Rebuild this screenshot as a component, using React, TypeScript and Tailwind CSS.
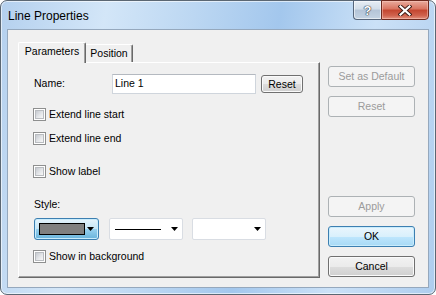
import { ReactNode } from "react";

const FONT = "[font-family:'Liberation_Sans',Arial,sans-serif]";

function CheckBox({ label }: { label: string }) {
  return (
    <div className="flex h-[13px] items-center">
      <span className="flex h-[13px] w-[13px] border border-[#8e8f8f] bg-white p-px">
        <span className="flex-1 border border-[#b9bcc0] bg-[linear-gradient(135deg,#c6cad0_0%,#e4e6e9_55%,#f7f7f7_100%)]" />
      </span>
      <span className="ml-[3px] text-[10.5px] leading-[13px] text-black">{label}</span>
    </div>
  );
}

function Btn({
  children,
  disabled,
  primary,
  className = "",
}: {
  children: ReactNode;
  disabled?: boolean;
  primary?: boolean;
  className?: string;
}) {
  const look = disabled
    ? "border-[#adb2b5] bg-[#f4f4f4] text-[#9b9b9b]"
    : primary
      ? "border-[#3c7fb1] bg-[linear-gradient(to_bottom,#eaf6fd_0%,#d9f0fc_50%,#bee6fd_51%,#a7d9f5_100%)] text-black shadow-[inset_0_0_0_1px_#c9ecfc]"
      : "border-[#707070] bg-[linear-gradient(to_bottom,#f2f2f2_0%,#ebebeb_50%,#dddddd_51%,#cfcfcf_100%)] text-black shadow-[inset_0_0_0_1px_#fafafa]";
  return (
    <div
      className={`flex items-center justify-center rounded-[3px] border text-[10.5px] leading-none ${look} ${className}`}
    >
      {children}
    </div>
  );
}

function Arrow() {
  return (
    <svg width="7" height="4" viewBox="0 0 7 4">
      <path d="M0 0H7L3.5 4Z" fill="#000" />
    </svg>
  );
}

export default function App() {
  return (
    <div className={`h-[295px] w-[436px] bg-white ${FONT}`}>
      <div className="flex h-[295px] w-[436px] flex-col rounded-[7px] border border-[#5b6773] bg-[linear-gradient(100deg,#b4d0ee_0%,#d3e6f8_22%,#bcd7f2_40%,#a3c7ed_58%,#cbe1f7_78%,#aecdee_100%)] shadow-[inset_0_0_0_1px_rgba(255,255,255,0.6)]">
        {/* title bar */}
        <div className="flex h-[28px] items-start justify-between">
          <span className="pl-[7px] pt-[8px] text-[12px] leading-[14px] text-black">Line Properties</span>
          <div className="-mt-px mr-[6px] flex h-[20px]">
            <div className="flex w-[28px] items-center justify-center rounded-bl-[4px] border border-r-0 border-[#56657a] bg-[linear-gradient(to_bottom,#e6edf5_0%,#d2dde9_45%,#b4c4d7_50%,#c4d3e3_100%)] shadow-[inset_0_0_0_1px_rgba(255,255,255,0.55)]">
              <span className="text-[13px] font-bold leading-none text-white [text-shadow:0_0_1px_#2a3440,0_0_1px_#2a3440,0_0_1px_#2a3440]">
                ?
              </span>
            </div>
            <div className="flex w-[48px] items-center justify-center rounded-br-[4px] border border-[#6e2a1f] bg-[linear-gradient(to_bottom,#e9ab9d_0%,#d9735f_45%,#c3452f_50%,#d0624d_80%,#e2927f_100%)] shadow-[inset_0_0_0_1px_rgba(255,210,200,0.45)]">
              <svg width="14" height="11" viewBox="0 0 14 11">
                <path d="M2.5 1.5L11.5 9.5M11.5 1.5L2.5 9.5" stroke="#3a1a14" strokeWidth="4" strokeLinecap="square" />
                <path d="M2.5 1.5L11.5 9.5M11.5 1.5L2.5 9.5" stroke="#ffffff" strokeWidth="2.2" strokeLinecap="square" />
              </svg>
            </div>
          </div>
        </div>

        {/* client */}
        <div className="flex flex-1 px-[6px] pb-[6px]">
          <div className="flex flex-1 border border-[#95a8bd] bg-[#f0f0f0] pl-[10px] pt-[13px]">
            {/* tab control */}
            <div className="flex w-[302px] flex-col">
              <div className="flex h-[19px] items-end">
                <div className="relative z-10 -mb-px flex h-[21px] w-[68px] items-center justify-center rounded-t-[2px] border-l border-t border-r border-l-white border-t-white border-r-[#696969] bg-[#f0f0f0] pb-[2px] text-[10.5px] text-black shadow-[inset_-1px_0_0_#a0a0a0]">
                  Parameters
                </div>
                <div className="flex h-[18px] w-[47px] items-center justify-center rounded-tr-[2px] border-t border-r border-t-white border-r-[#696969] text-[10.5px] text-black shadow-[inset_-1px_0_0_#a0a0a0]">
                  Position
                </div>
              </div>
              <div className="flex h-[216px] flex-col border border-l-white border-t-white border-r-[#696969] border-b-[#696969] shadow-[inset_-1px_-1px_0_#a0a0a0]">
                <div className="mt-[11px] flex h-[20px] items-center">
                  <span className="ml-[15px] w-[78px] text-[10.5px] text-black">Name:</span>
                  <div className="flex h-[20px] w-[144px] items-center border border-[#cfd5dc] border-t-[#b4b9c0] bg-white pl-[2px] text-[10.5px] text-black">
                    Line 1
                  </div>
                  <Btn className="ml-[5px] h-[18px] w-[42px]">Reset</Btn>
                </div>
                <div className="ml-[14px] mt-[14px]">
                  <CheckBox label="Extend line start" />
                </div>
                <div className="ml-[14px] mt-[11px]">
                  <CheckBox label="Extend line end" />
                </div>
                <div className="ml-[14px] mt-[20px]">
                  <CheckBox label="Show label" />
                </div>
                <span className="ml-[15px] mt-[20px] text-[10.5px] leading-[13px] text-black">Style:</span>
                <div className="mt-[7px] flex h-[22px]">
                  <div className="ml-[15px] flex w-[65px] items-center rounded-[3px] border border-[#3c7fb1] bg-[linear-gradient(to_bottom,#e5f4fc_0%,#c4e5f6_50%,#98d1ef_51%,#68b3db_100%)] pl-[4px] pr-[4px] shadow-[inset_0_0_0_1px_#c9ecfc]">
                    <span className="h-[12px] w-[47px] border border-black bg-[#808080]" />
                    <span className="ml-[2px] flex">
                      <Arrow />
                    </span>
                  </div>
                  <div className="ml-[10px] flex w-[74px] items-center rounded-[2px] border border-[#d9dde3] bg-white pl-[5px] pr-[4px]">
                    <span className="h-px w-[46px] bg-black" />
                    <span className="ml-auto flex">
                      <Arrow />
                    </span>
                  </div>
                  <div className="ml-[9px] flex w-[74px] items-center rounded-[2px] border border-[#d9dde3] bg-white pr-[4px]">
                    <span className="ml-auto flex">
                      <Arrow />
                    </span>
                  </div>
                </div>
                <div className="ml-[14px] mt-[10px]">
                  <CheckBox label="Show in background" />
                </div>
              </div>
            </div>

            {/* button column */}
            <div className="ml-[8px] flex w-[87px] flex-col pb-[10px]">
              <div className="mt-[23px] flex flex-col gap-[9px]">
                <Btn disabled className="h-[21px]">Set as Default</Btn>
                <Btn disabled className="h-[21px]">Reset</Btn>
              </div>
              <div className="flex-1" />
              <div className="flex flex-col gap-[9px]">
                <Btn disabled className="h-[21px]">Apply</Btn>
                <Btn primary className="h-[21px]">OK</Btn>
                <Btn className="h-[21px]">Cancel</Btn>
              </div>
            </div>
          </div>
        </div>
      </div>
    </div>
  );
}
